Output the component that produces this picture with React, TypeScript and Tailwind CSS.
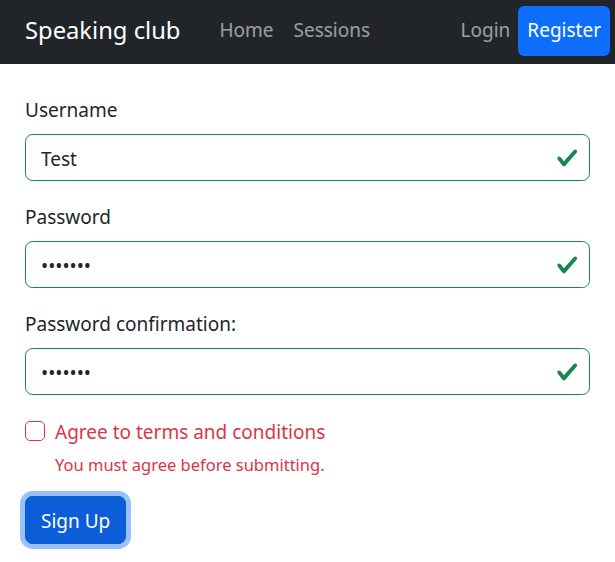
import { useState } from 'react'

function ValidIcon() {
  return (
    <svg viewBox="0 0 8 8" className="pointer-events-none absolute right-[12px] top-1/2 h-[22.5px] w-[22.5px] -translate-y-1/2">
      <path
        fill="#198754"
        d="M2.3 6.73.6 4.53c-.4-1.04.46-1.4 1.1-.8l1.1 1.4 3.4-3.8c.6-.63 1.6-.27 1.2.7l-4 4.6c-.43.5-.8.4-1.1.1z"
      />
    </svg>
  )
}

interface FieldProps {
  label: string
  type: string
  value: string
}

function Field({ label, type, value }: FieldProps) {
  return (
    <div className="mb-[20px]">
      <label className="mb-[10px] block pt-[2px] leading-[28px]">{label}</label>
      <div className="relative">
        <input
          type={type}
          value={value}
          readOnly
          className="block h-[47px] w-full rounded-[7.5px] border border-[#198754] bg-white pb-[6px] pl-[15px] pr-[50px] pt-[9px] leading-[30px] text-[#212529] outline-none"
        />
        <ValidIcon />
      </div>
    </div>
  )
}

export default function App() {
  const [agree, setAgree] = useState(false)

  return (
    <div className="min-h-screen bg-white text-[19px] text-[#212529]" style={{ fontFamily: '"Noto Sans", sans-serif' }}>
      <nav className="flex h-[64px] items-center bg-[#212529] pl-[25px] pr-[5px]">
        <a className="mr-[29px] pb-[2px] text-[23.75px] leading-[37.5px] text-white">Speaking club</a>
        <a className="px-[10px] pb-[12px] pt-[8px] leading-[30px] text-white/55">Home</a>
        <a className="px-[10px] pb-[12px] pt-[8px] leading-[30px] text-white/55">Sessions</a>
        <div className="ml-auto flex items-center">
          <a className="pl-[10px] pr-[8px] pb-[12px] pt-[8px] leading-[30px] text-white/55">Login</a>
          <a className="mb-[2px] rounded-[6px] bg-[#0d6efd] px-[9px] pb-[11px] pt-[9px] leading-[30px] text-white">Register</a>
        </div>
      </nav>

      <form className="px-[25px] pt-[30px]" onSubmit={(e) => e.preventDefault()}>
        <Field label="Username" type="text" value="Test" />
        <Field label="Password" type="password" value="1234567" />
        <Field label="Password confirmation:" type="password" value="1234567" />

        <div className="mb-[18px] pl-[30px]">
          <div className="flex items-start leading-[30px]">
            <input
              type="checkbox"
              checked={agree}
              onChange={(e) => setAgree(e.target.checked)}
              className="ml-[-30px] mr-[10px] mt-[6px] h-[20px] w-[20px] shrink-0 appearance-none rounded-[5px] border border-[#dc3545] bg-white"
            />
            <label className="pt-[2px] text-[#dc3545]">Agree to terms and conditions</label>
          </div>
          <div className="mt-[5px] text-[16.5px] leading-[26px] text-[#dc3545]">You must agree before submitting.</div>
        </div>

        <button
          type="submit"
          className="h-[48px] rounded-[7.5px] border border-[#0a58ca] bg-[#0b5ed7] px-[15px] pb-[6px] pt-[8px] leading-[30px] text-white shadow-[0_0_0_5px_rgba(49,132,253,0.5)]"
        >
          Sign Up
        </button>
      </form>
    </div>
  )
}
